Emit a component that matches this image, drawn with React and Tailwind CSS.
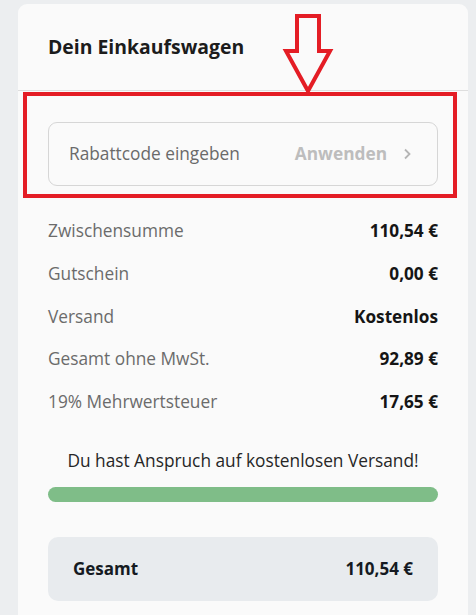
import React from 'react';

const rows = [
  ['Zwischensumme', '110,54 €'],
  ['Gutschein', '0,00 €'],
  ['Versand', 'Kostenlos'],
  ['Gesamt ohne MwSt.', '92,89 €'],
  ['19% Mehrwertsteuer', '17,65 €'],
];

export default function App() {
  return (
    <div className="relative w-[476px] h-[615px] overflow-hidden bg-[#eceef0] pt-[4px] pl-[18px]" style={{ fontFamily: '"Open Sans", Lato, sans-serif' }}>
      {/* Warenkorb-Karte */}
      <div className="w-[450px] h-[640px] bg-[#fafafa] rounded-t-[9px]">
        <div className="h-[87px] flex items-center px-[30px] border-b border-[#dedede]">
          <h2 className="text-[19.4px] font-bold text-[#1c1c1c]">Dein Einkaufswagen</h2>
        </div>

        <div className="px-[30px] pt-[31px]">
          <div className="h-[64px] flex items-center justify-between border border-[#d6d6d6] rounded-[9px] pl-[20px] pr-[26px]">
            <span className="text-[17.3px] text-[#6a6a6a]">Rabattcode eingeben</span>
            <span className="flex items-center gap-[16px] text-[17.3px] font-bold text-[#bdbdbd]">
              Anwenden
              <svg width="8" height="12" viewBox="0 0 8 12" fill="none" stroke="#b5b5b5" strokeWidth="1.8">
                <path d="M2 1.5 L6.5 6 L2 10.5" />
              </svg>
            </span>
          </div>

          <div className="mt-[24px]">
            {rows.map(([label, value]) => (
              <div key={label} className="h-[42.6px] flex items-center justify-between">
                <span className="text-[17.3px] text-[#6b6b6b]">{label}</span>
                <span className="text-[17.2px] font-bold text-[#151515]">{value}</span>
              </div>
            ))}
          </div>

          <p className="mt-[26px] text-center text-[17.3px] leading-[24px] text-[#262626]">
            Du hast Anspruch auf kostenlosen Versand!
          </p>
          <div className="mt-[14px] h-[15px] rounded-full bg-[#7fbd88]"></div>

          <div className="mt-[35px] h-[64px] rounded-[10px] bg-[#e8ebee] flex items-center justify-between px-[25px] text-[17px] font-bold text-[#151a22]">
            <span>Gesamt</span>
            <span>110,54 €</span>
          </div>
        </div>
      </div>

      {/* Markierung */}
      <div className="absolute left-[23px] top-[92px] w-[434px] h-[106px] border-[4px] border-[#e41d25]"></div>
      <svg className="absolute left-0 top-0" width="476" height="110" fill="none" stroke="#e41d25" strokeWidth="4" strokeLinejoin="miter">
        <polygon points="297,16 319,16 319,51 330,51 308,91 286,51 297,51" />
      </svg>
    </div>
  );
}
